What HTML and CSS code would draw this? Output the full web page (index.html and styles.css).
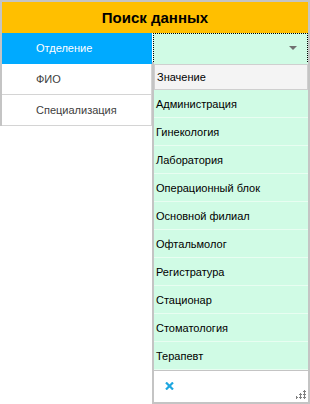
FILE: index.html
```html
<!DOCTYPE html>
<html lang="ru">
<head>
    <meta charset="UTF-8">
    <title>Поиск данных</title>
    <link rel="stylesheet" href="styles.css">
</head>
<body>
    <div class="search-panel">
        <div class="title">Поиск данных</div>
        <div class="rows">
            <div class="label active">Отделение</div>
            <div class="value focused"><span class="arrow"></span></div>
            <div class="label">ФИО</div>
            <div class="value"></div>
            <div class="label">Специализация</div>
            <div class="value"></div>
        </div>
    </div>
    <div class="dropdown">
        <div class="dropdown-head">Значение</div>
        <ul class="dropdown-list">
            <li>Администрация</li>
            <li>Гинекология</li>
            <li>Лаборатория</li>
            <li>Операционный блок</li>
            <li>Основной филиал</li>
            <li>Офтальмолог</li>
            <li>Регистратура</li>
            <li>Стационар</li>
            <li>Стоматология</li>
            <li>Терапевт</li>
        </ul>
        <div class="dropdown-foot">
            <svg class="clear" width="9" height="8" viewBox="0 0 9 8">
                <path d="M1 0.5 L8 7.5 M8 0.5 L1 7.5" stroke="#1ea7e0" stroke-width="2.2"/>
            </svg>
            <svg class="grip" width="10" height="10" viewBox="0 0 10 10">
                <g fill="#808080">
                    <rect x="8" y="0" width="1" height="3"/><rect x="7" y="1" width="3" height="1"/>
                    <rect x="4" y="3" width="1" height="3"/><rect x="3" y="4" width="3" height="1"/>
                    <rect x="8" y="3" width="1" height="3"/><rect x="7" y="4" width="3" height="1"/>
                    <rect x="0" y="6" width="1" height="3"/><rect x="-1" y="7" width="3" height="1"/>
                    <rect x="4" y="6" width="1" height="3"/><rect x="3" y="7" width="3" height="1"/>
                    <rect x="8" y="6" width="1" height="3"/><rect x="7" y="7" width="3" height="1"/>
                </g>
            </svg>
        </div>
    </div>
</body>
</html>
```

FILE: styles.css
```css
body {
    margin: 0;
    padding: 0;
    background-color: #ffffff;
    font-family: "Liberation Sans", Arial, sans-serif;
    font-size: 11px;
    color: #000;
    width: 310px;
    height: 404px;
    position: relative;
    overflow: hidden;
}
.search-panel {
    width: 310px;
    border: 2px solid #c4c4c4;
    border-bottom: none;
    box-sizing: border-box;
}
.title {
    height: 31px;
    background-color: #ffbf00;
    font-size: 15px;
    font-weight: bold;
    display: flex;
    align-items: center;
    justify-content: center;
}
.rows {
    display: grid;
    grid-template-columns: 150px 1fr;
}
.label {
    height: 30px;
    display: flex;
    align-items: center;
    padding-left: 34px;
    color: #404040;
    border-bottom: 1px solid #d4d4d4;
    border-right: 1px solid #d4d4d4;
}
.label.active {
    background-color: #00aaff;
    color: #ffffff;
    border-bottom: 1px solid #00aaff;
    border-right: 1px solid #00aaff;
}
.value {
    height: 30px;
    border-bottom: 1px solid #d4d4d4;
    margin-left: 1px;
}
.value.focused {
    background-color: #d0fbe5;
    border: 1px dotted #000;
    box-sizing: border-box;
    height: 31px;
    position: relative;
}
.arrow {
    position: absolute;
    right: 10px;
    top: 12px;
    border-left: 4px solid transparent;
    border-right: 4px solid transparent;
    border-top: 4px solid #707070;
}
.dropdown {
    position: absolute;
    left: 152px;
    top: 62px;
    width: 158px;
    height: 342px;
    border: 2px solid #c4c4c4;
    border-top: none;
    box-sizing: border-box;
    background-color: #d0fbe5;
    display: flex;
    flex-direction: column;
}
.dropdown-head {
    height: 26px;
    margin-top: 2px;
    background-color: #f4f4f4;
    border: 1px solid #cfcfcf;
    box-sizing: border-box;
    display: flex;
    align-items: center;
    padding-left: 2px;
}
.dropdown-list {
    list-style: none;
    margin: 0;
    padding: 0;
}
.dropdown-list li {
    height: 28px;
    box-sizing: border-box;
    border-bottom: 1px solid #e8fdf1;
    display: flex;
    align-items: center;
    padding-left: 2px;
}
.dropdown-foot {
    flex: 1;
    background-color: #ffffff;
    border-top: 1px solid #c4c4c4;
    position: relative;
}
.clear {
    position: absolute;
    left: 11px;
    top: 11px;
}
.grip {
    position: absolute;
    right: 2px;
    bottom: 2px;
}
```
